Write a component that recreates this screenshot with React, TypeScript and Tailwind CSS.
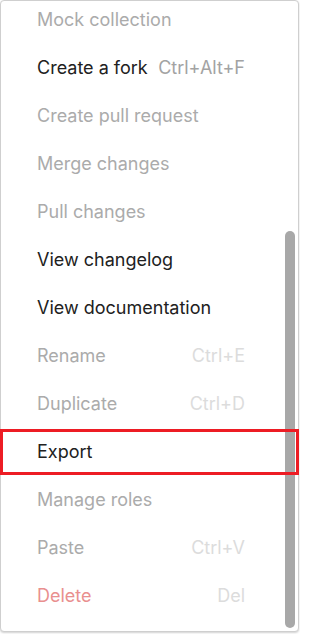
import React from "react";

type Item = { label: string; shortcut?: string; kind: "disabled" | "enabled" | "danger" };

const items: Item[] = [
  { label: "Mock collection", kind: "disabled" },
  { label: "Create a fork", shortcut: "Ctrl+Alt+F", kind: "enabled" },
  { label: "Create pull request", kind: "disabled" },
  { label: "Merge changes", kind: "disabled" },
  { label: "Pull changes", kind: "disabled" },
  { label: "View changelog", kind: "enabled" },
  { label: "View documentation", kind: "enabled" },
  { label: "Rename", shortcut: "Ctrl+E", kind: "disabled" },
  { label: "Duplicate", shortcut: "Ctrl+D", kind: "disabled" },
  { label: "Export", kind: "enabled" },
  { label: "Manage roles", kind: "disabled" },
  { label: "Paste", shortcut: "Ctrl+V", kind: "disabled" },
  { label: "Delete", shortcut: "Del", kind: "danger" },
];

export default function App() {
  return (
    <div
      className="relative w-[300px] h-[634px] bg-white overflow-hidden"
      style={{ fontFamily: "Inter, 'Noto Sans', sans-serif" }}
    >
      <div className="relative w-[299px] h-[632px] border border-[#cfcfcf] rounded-[4px] bg-white shadow-[0_1px_2px_rgba(0,0,0,0.18)] overflow-hidden">
        <div className="-mt-[5px] flex flex-col">
          {items.map((it) => (
            <div key={it.label} className="h-12 flex items-center pl-[36px]">
              <div className="w-[208px] flex items-center justify-between text-[18px] leading-none">
                <span
                  className={
                    it.kind === "enabled"
                      ? "text-[#212121]"
                      : it.kind === "danger"
                      ? "text-[#e98f8f]"
                      : "text-[#ababab]"
                  }
                >
                  {it.label}
                </span>
                {it.shortcut && (
                  <span className={it.kind === "enabled" ? "text-[#a3a3a3]" : "text-[#dcdcdc]"}>
                    {it.shortcut}
                  </span>
                )}
              </div>
            </div>
          ))}
        </div>
        <div className="absolute left-[284px] top-[230px] w-[10px] h-[397px] rounded-full bg-[#a8a8a8]" />
      </div>
      <div className="absolute left-0 top-[429px] w-[299px] h-[46px] border-[3px] border-[#ed1c24]" />
    </div>
  );
}
